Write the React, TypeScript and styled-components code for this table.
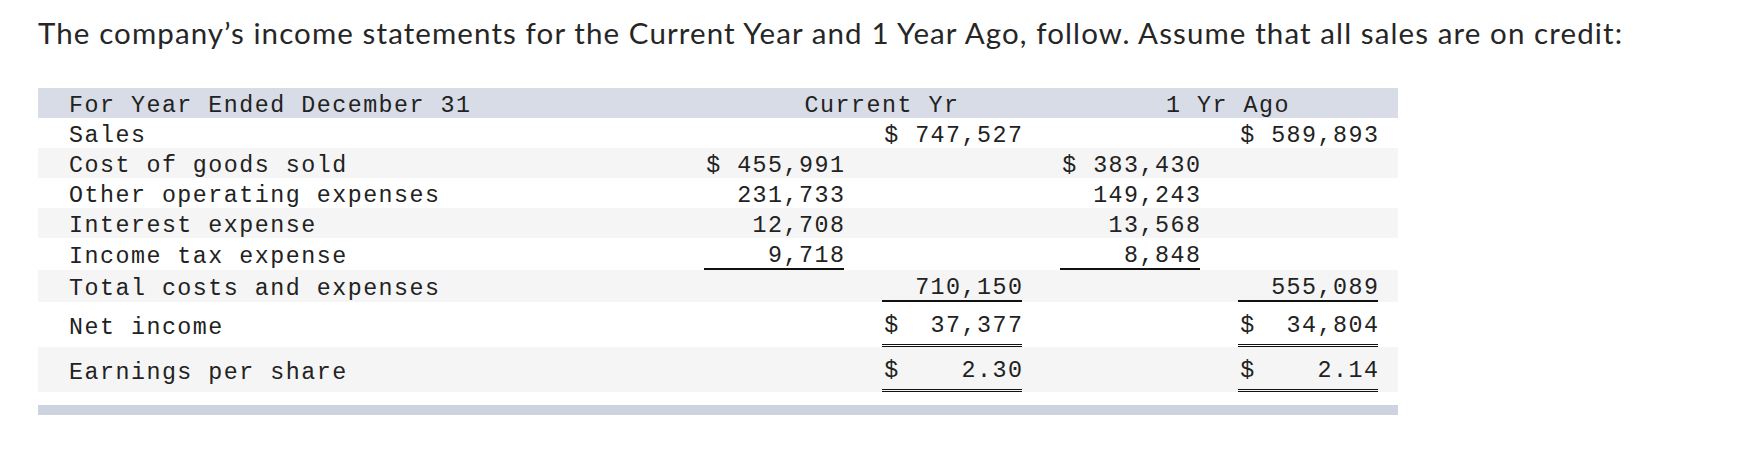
import styled, { createGlobalStyle } from "styled-components";

const GlobalStyle = createGlobalStyle`
  body {
    margin: 0;
    background: #ffffff;
  }
`;

const Page = styled.div`
  padding: 14px 0 0 38px;
  width: 1360px;
`;

const Prompt = styled.p`
  margin: 0;
  font-family: Lato, "Open Sans", sans-serif;
  font-size: 29.5px;
  line-height: 37px;
  letter-spacing: 1.1px;
  color: #262626;
  white-space: nowrap;
`;

const Statement = styled.table`
  margin-top: 37px;
  width: 1360px;
  border-collapse: collapse;
  border-spacing: 0;
  table-layout: fixed;
  font-family: "Liberation Mono", "DejaVu Sans Mono", monospace;
  font-size: 23.3px;
  letter-spacing: 1.5px;
  color: #222222;
`;

type Tone = "head" | "plain" | "shade";

const Row = styled.tr<{ $tone: Tone }>`
  background: ${({ $tone }) =>
    $tone === "head" ? "#d8dce6" : $tone === "shade" ? "#f5f5f5" : "#ffffff"};
`;

const Label = styled.td`
  padding: 6px 0 0 31px;
  line-height: 24px;
  vertical-align: middle;
  white-space: pre;
`;

const HeadCell = styled.td<{ $shift: number }>`
  padding: 6px 0 0 ${({ $shift }) => $shift}px;
  line-height: 24px;
  text-align: center;
  white-space: pre;
`;

const ValueCell = styled.td`
  padding: 0 20px 0 0;
  vertical-align: bottom;
`;

type Rule = "none" | "single" | "double";

const Amount = styled.div<{ $rule: Rule }>`
  width: 140px;
  margin-left: auto;
  line-height: 24px;
  text-align: right;
  white-space: pre;
  padding: ${({ $rule }) => ($rule === "double" ? "12px 0 6px" : "6px 0 0")};
  border-bottom: ${({ $rule }) =>
    $rule === "single"
      ? "2px solid #111111"
      : $rule === "double"
      ? "3px double #111111"
      : "none"};

  span {
    margin-right: -1.5px;
  }
`;

const Footer = styled.div`
  margin-top: 13px;
  height: 10px;
  background: #cdd3df;
`;

type Cell = { value: string; rule?: Rule } | null;

type Line = { label: string; cells: Cell[] };

const lines: Line[] = [
  { label: "Sales", cells: [null, { value: "$ 747,527" }, null, { value: "$ 589,893" }] },
  { label: "Cost of goods sold", cells: [{ value: "$ 455,991" }, null, { value: "$ 383,430" }, null] },
  { label: "Other operating expenses", cells: [{ value: "231,733" }, null, { value: "149,243" }, null] },
  { label: "Interest expense", cells: [{ value: "12,708" }, null, { value: "13,568" }, null] },
  { label: "Income tax expense", cells: [{ value: "9,718", rule: "single" }, null, { value: "8,848", rule: "single" }, null] },
  { label: "Total costs and expenses", cells: [null, { value: "710,150", rule: "single" }, null, { value: "555,089", rule: "single" }] },
  { label: "Net income", cells: [null, { value: "$  37,377", rule: "double" }, null, { value: "$  34,804", rule: "double" }] },
  { label: "Earnings per share", cells: [null, { value: "$    2.30", rule: "double" }, null, { value: "$    2.14", rule: "double" }] },
];

function App() {
  return (
    <Page>
      <GlobalStyle />
      <Prompt>
        The company’s income statements for the Current Year and 1 Year Ago, follow. Assume that all sales are on credit:
      </Prompt>
      <Statement>
        <colgroup>
          <col style={{ width: 648 }} />
          <col style={{ width: 178 }} />
          <col style={{ width: 178 }} />
          <col style={{ width: 178 }} />
          <col style={{ width: 178 }} />
        </colgroup>
        <tbody>
          <Row $tone="head">
            <Label>For Year Ended December 31</Label>
            <HeadCell colSpan={2} $shift={36}>Current Yr</HeadCell>
            <HeadCell colSpan={2} $shift={16}>1 Yr Ago</HeadCell>
          </Row>
          {lines.map((line, i) => (
            <Row key={line.label} $tone={i % 2 === 1 ? "shade" : "plain"}>
              <Label>{line.label}</Label>
              {line.cells.map((cell, j) => (
                <ValueCell key={j}>
                  {cell && (
                    <Amount $rule={cell.rule ?? "none"}>
                      <span>{cell.value}</span>
                    </Amount>
                  )}
                </ValueCell>
              ))}
            </Row>
          ))}
        </tbody>
      </Statement>
      <Footer />
    </Page>
  );
}

export default App;
